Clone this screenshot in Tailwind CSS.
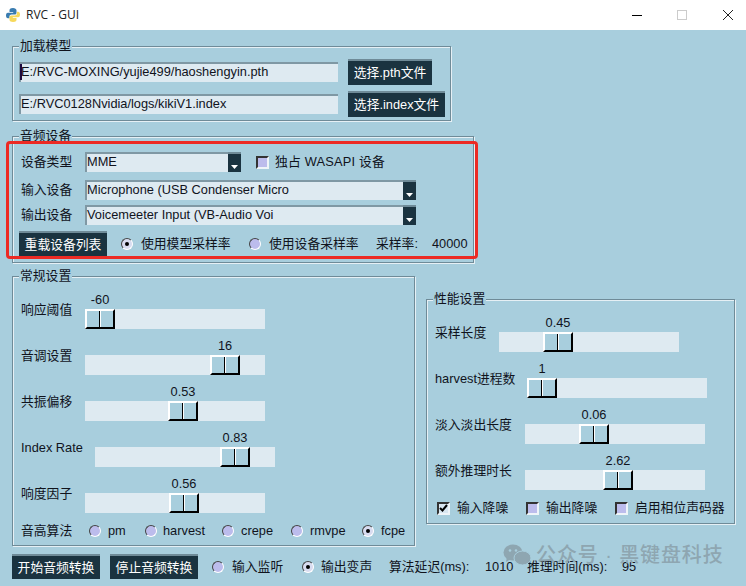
<!DOCTYPE html>
<html lang="en">
<head>
<meta charset="UTF-8">
<title>RVC - GUI</title>
<script src="https://cdn.jsdelivr.net/npm/@tailwindcss/browser@4"></script>
</head>
<body class="relative h-[586px] w-[746px] overflow-hidden bg-[#a8cedd] font-['Liberation_Sans','Noto_Sans_CJK_SC',sans-serif] text-[12.8px] leading-5 text-[#10131c]">

<!-- title bar -->
<div class="flex h-[30px] items-center bg-white">
  <svg class="ml-[5px]" width="16" height="16" viewBox="0 0 16 16">
    <path d="M8 1C5 1 4.500 2 4.500 3.500V5H8.200V5.700H3C1.500 5.700 1 7 1 8.500S1.600 11.300 3 11.300H4.500V9.500C4.500 8.300 5.400 7.600 6.500 7.600H9.800C10.800 7.600 11.500 6.800 11.500 5.800V3.300C11.500 2 10 1 8 1Z" fill="#3a7cb0"/>
    <path d="M8 15C11 15 11.500 14 11.500 12.500V11H7.800V10.300H13C14.500 10.300 15 9 15 7.500S14.400 4.700 13 4.700H11.900V6.500C11.900 7.700 11 8.400 9.900 8.400H6.200C5.200 8.400 4.500 9.200 4.500 10.200V12.700C4.500 14 6 15 8 15Z" fill="#f7d95c"/>
  </svg>
  <span class="ml-[5px] font-['Open_Sans'] text-[12px] text-[#222]">RVC - GUI</span>
  <div class="ml-auto flex items-center">
    <div class="h-px w-[10px] bg-black"></div>
    <div class="ml-[35px] size-[10px] border border-[#ccc]"></div>
    <svg class="ml-[36px] mr-[13px]" width="10" height="10" viewBox="0 0 10 10"><path d="M0 0L10 10M10 0L0 10" stroke="#222" fill="none"/></svg>
  </div>
</div>

<div class="pl-3">
  <!-- 加载模型 -->
  <div class="relative mt-4 h-[75px] w-[439px] border border-[#6f8b98] pl-[6px] pt-3 shadow-[1px_1px_0_#e6f0f5,inset_1px_1px_0_#e6f0f5]">
    <span class="absolute -top-[11px] left-[6px] bg-[#a8cedd] px-px">加载模型</span>
    <div class="flex h-[26px] items-center">
      <div class="relative h-5 w-[319px] border-t-2 border-l-2 border-t-[#7f98a4] border-l-[#7f98a4] bg-[#deeaf1] leading-[16px]">
        <span class="absolute -left-px top-0 h-4 w-0.5 bg-[#1c0a40]"></span>E:/RVC-MOXING/yujie499/haoshengyin.pth
      </div>
      <button class="ml-[10px] h-[26px] w-[84px] border-t-2 border-t-[#6f8b98] bg-[#1a3340] text-white">选择.pth文件</button>
    </div>
    <div class="mt-[6px] flex h-[26px] items-center">
      <div class="h-5 w-[319px] border-t-2 border-l-2 border-t-[#7f98a4] border-l-[#7f98a4] bg-[#deeaf1] leading-[16px]">E:/RVC0128Nvidia/logs/kikiV1.index</div>
      <button class="ml-[10px] h-[26px] w-[97px] border-t-2 border-t-[#6f8b98] bg-[#1a3340] text-white">选择.index文件</button>
    </div>
  </div>

  <!-- 音频设备 -->
  <div class="relative mt-[15px] h-[127px] w-[462px] border border-[#6f8b98] pl-[6px] pt-[15px] shadow-[1px_1px_0_#e6f0f5,inset_1px_1px_0_#e6f0f5]">
    <span class="absolute -top-[11px] left-[6px] bg-[#a8cedd] px-px">音频设备</span>
    <div class="flex h-5 items-center">
      <span class="-mt-px w-[66px] pl-0.5">设备类型</span>
      <div class="flex h-5 w-[156px] bg-[#deeaf1]">
        <span class="flex-1 border-t-2 border-l-2 border-t-[#7f98a4] border-l-[#7f98a4] leading-[15px]">MME</span>
        <span class="flex w-[13px] items-end justify-center border-t-2 border-t-[#6f8b98] bg-[#1a3340] pb-[3px]"><svg width="7" height="4" viewBox="0 0 7 4"><path d="M0 0H7L3.500 4Z" fill="#fff"/></svg></span>
      </div>
      <span class="ml-[15px] size-[13px] border-2 border-t-[#333] border-l-[#333] border-b-[#eef4f8] border-r-[#eef4f8] bg-[#bcbcec]"></span>
      <span class="ml-[6px] tracking-[0.2px]">独占 WASAPI 设备</span>
    </div>
    <div class="mt-2 flex h-5 items-center">
      <span class="-mt-px w-[66px] pl-0.5">输入设备</span>
      <div class="flex h-5 w-[331px] bg-[#deeaf1]">
        <span class="flex-1 border-t-2 border-l-2 border-t-[#7f98a4] border-l-[#7f98a4] leading-[15px]">Microphone (USB Condenser Micro</span>
        <span class="flex w-[13px] items-end justify-center border-t-2 border-t-[#6f8b98] bg-[#1a3340] pb-[3px]"><svg width="7" height="4" viewBox="0 0 7 4"><path d="M0 0H7L3.500 4Z" fill="#fff"/></svg></span>
      </div>
    </div>
    <div class="mt-[5px] flex h-5 items-center">
      <span class="-mt-px w-[66px] pl-0.5">输出设备</span>
      <div class="flex h-5 w-[331px] bg-[#deeaf1]">
        <span class="flex-1 border-t-2 border-l-2 border-t-[#7f98a4] border-l-[#7f98a4] leading-[15px]">Voicemeeter Input (VB-Audio Voi</span>
        <span class="flex w-[13px] items-end justify-center border-t-2 border-t-[#6f8b98] bg-[#1a3340] pb-[3px]"><svg width="7" height="4" viewBox="0 0 7 4"><path d="M0 0H7L3.500 4Z" fill="#fff"/></svg></span>
      </div>
    </div>
    <div class="mt-[6px] flex h-[26px] items-center">
      <button class="h-[26px] w-[88px] border-t-2 border-t-[#6f8b98] bg-[#1a3340] text-white">重载设备列表</button>
      <span class="ml-[14px] flex size-3 items-center justify-center rounded-full border-[1.5px] border-t-[#444] border-l-[#444] border-b-white border-r-white bg-[#d8dcf0]"><span class="size-1 rounded-full bg-black"></span></span>
      <span class="ml-2 w-[108px]">使用模型采样率</span>
      <span class="size-3 rounded-full border-[1.5px] border-t-[#444] border-l-[#444] border-b-white border-r-white bg-[#bcbcec]"></span>
      <span class="ml-2 w-[107px]">使用设备采样率</span>
      <span class="w-[56px]">采样率:</span>
      <span>40000</span>
    </div>
  </div>

  <div class="flex items-start">
    <!-- 常规设置 -->
    <div class="relative mt-[13px] h-[270px] w-[403px] border border-[#6f8b98] pl-2 pt-[32px] shadow-[1px_1px_0_#e6f0f5,inset_1px_1px_0_#e6f0f5]">
      <span class="absolute -top-[11px] left-[6px] bg-[#a8cedd] px-px">常规设置</span>
      <div class="flex h-5 items-start">
        <span class="-mt-[9px] w-[64px]">响应阈值</span>
        <div class="relative h-5 w-[180px] bg-[#deeaf1]">
          <div class="absolute left-0 top-0 flex h-5 w-[30px] border-2 border-t-white border-l-white border-b-black border-r-black bg-[#a8cedd]">
            <span class="absolute -top-[21px] left-0 w-[26px] text-center">-60</span>
            <i class="flex-1 border-r border-r-black"></i><i class="flex-1 border-l border-l-white"></i>
          </div>
        </div>
      </div>
      <div class="mt-[26px] flex h-5 items-start">
        <span class="-mt-[9px] w-[64px]">音调设置</span>
        <div class="relative h-5 w-[180px] bg-[#deeaf1]">
          <div class="absolute left-[125px] top-0 flex h-5 w-[30px] border-2 border-t-white border-l-white border-b-black border-r-black bg-[#a8cedd]">
            <span class="absolute -top-[21px] left-0 w-[26px] text-center">16</span>
            <i class="flex-1 border-r border-r-black"></i><i class="flex-1 border-l border-l-white"></i>
          </div>
        </div>
      </div>
      <div class="mt-[26px] flex h-5 items-start">
        <span class="-mt-[9px] w-[64px]">共振偏移</span>
        <div class="relative h-5 w-[180px] bg-[#deeaf1]">
          <div class="absolute left-[83px] top-0 flex h-5 w-[30px] border-2 border-t-white border-l-white border-b-black border-r-black bg-[#a8cedd]">
            <span class="absolute -top-[21px] left-0 w-[26px] text-center">0.53</span>
            <i class="flex-1 border-r border-r-black"></i><i class="flex-1 border-l border-l-white"></i>
          </div>
        </div>
      </div>
      <div class="mt-[26px] flex h-5 items-start">
        <span class="-mt-[9px] w-[74px]">Index Rate</span>
        <div class="relative h-5 w-[180px] bg-[#deeaf1]">
          <div class="absolute left-[125px] top-0 flex h-5 w-[30px] border-2 border-t-white border-l-white border-b-black border-r-black bg-[#a8cedd]">
            <span class="absolute -top-[21px] left-0 w-[26px] text-center">0.83</span>
            <i class="flex-1 border-r border-r-black"></i><i class="flex-1 border-l border-l-white"></i>
          </div>
        </div>
      </div>
      <div class="mt-[26px] flex h-5 items-start">
        <span class="-mt-[9px] w-[64px]">响度因子</span>
        <div class="relative h-5 w-[180px] bg-[#deeaf1]">
          <div class="absolute left-[84px] top-0 flex h-5 w-[30px] border-2 border-t-white border-l-white border-b-black border-r-black bg-[#a8cedd]">
            <span class="absolute -top-[21px] left-0 w-[26px] text-center">0.56</span>
            <i class="flex-1 border-r border-r-black"></i><i class="flex-1 border-l border-l-white"></i>
          </div>
        </div>
      </div>
      <div class="mt-2 flex h-5 items-center">
        <span class="w-[68px]">音高算法</span>
        <span class="size-3 rounded-full border-[1.5px] border-t-[#444] border-l-[#444] border-b-white border-r-white bg-[#bcbcec]"></span>
        <span class="ml-[7px] w-[37px]">pm</span>
        <span class="size-3 rounded-full border-[1.5px] border-t-[#444] border-l-[#444] border-b-white border-r-white bg-[#bcbcec]"></span>
        <span class="ml-[6px] w-[59px]">harvest</span>
        <span class="size-3 rounded-full border-[1.5px] border-t-[#444] border-l-[#444] border-b-white border-r-white bg-[#bcbcec]"></span>
        <span class="ml-[7px] w-[50px]">crepe</span>
        <span class="size-3 rounded-full border-[1.5px] border-t-[#444] border-l-[#444] border-b-white border-r-white bg-[#bcbcec]"></span>
        <span class="ml-[7px] w-[52px]">rmvpe</span>
        <span class="flex size-3 items-center justify-center rounded-full border-[1.5px] border-t-[#444] border-l-[#444] border-b-white border-r-white bg-[#d8dcf0]"><span class="size-1 rounded-full bg-black"></span></span>
        <span class="ml-[7px]">fcpe</span>
      </div>
    </div>

    <!-- 性能设置 -->
    <div class="relative ml-[11px] mt-[36px] h-[225px] w-[309px] border border-[#6f8b98] pl-2 pt-[32px] shadow-[1px_1px_0_#e6f0f5,inset_1px_1px_0_#e6f0f5]">
      <span class="absolute -top-[11px] left-[6px] bg-[#a8cedd] px-px">性能设置</span>
      <div class="flex h-5 items-start">
        <span class="-mt-[9px] w-[64px]">采样长度</span>
        <div class="relative h-5 w-[180px] bg-[#deeaf1]">
          <div class="absolute left-[44px] top-0 flex h-5 w-[30px] border-2 border-t-white border-l-white border-b-black border-r-black bg-[#a8cedd]">
            <span class="absolute -top-[21px] left-0 w-[26px] text-center">0.45</span>
            <i class="flex-1 border-r border-r-black"></i><i class="flex-1 border-l border-l-white"></i>
          </div>
        </div>
      </div>
      <div class="mt-[26px] flex h-5 items-start">
        <span class="-mt-[9px] w-[92px]">harvest进程数</span>
        <div class="relative h-5 w-[180px] bg-[#deeaf1]">
          <div class="absolute left-0 top-0 flex h-5 w-[30px] border-2 border-t-white border-l-white border-b-black border-r-black bg-[#a8cedd]">
            <span class="absolute -top-[21px] left-0 w-[26px] text-center">1</span>
            <i class="flex-1 border-r border-r-black"></i><i class="flex-1 border-l border-l-white"></i>
          </div>
        </div>
      </div>
      <div class="mt-[26px] flex h-5 items-start">
        <span class="-mt-[9px] w-[90px]">淡入淡出长度</span>
        <div class="relative h-5 w-[180px] bg-[#deeaf1]">
          <div class="absolute left-[54px] top-0 flex h-5 w-[30px] border-2 border-t-white border-l-white border-b-black border-r-black bg-[#a8cedd]">
            <span class="absolute -top-[21px] left-0 w-[26px] text-center">0.06</span>
            <i class="flex-1 border-r border-r-black"></i><i class="flex-1 border-l border-l-white"></i>
          </div>
        </div>
      </div>
      <div class="mt-[26px] flex h-5 items-start">
        <span class="-mt-[9px] w-[90px]">额外推理时长</span>
        <div class="relative h-5 w-[180px] bg-[#deeaf1]">
          <div class="absolute left-[78px] top-0 flex h-5 w-[30px] border-2 border-t-white border-l-white border-b-black border-r-black bg-[#a8cedd]">
            <span class="absolute -top-[21px] left-0 w-[26px] text-center">2.62</span>
            <i class="flex-1 border-r border-r-black"></i><i class="flex-1 border-l border-l-white"></i>
          </div>
        </div>
      </div>
      <div class="mt-2 flex h-5 items-center pl-0.5">
        <span class="flex size-[13px] items-center justify-center border-2 border-t-[#333] border-l-[#333] border-b-[#eef4f8] border-r-[#eef4f8] bg-[#d8e6f0]"><svg width="9" height="8" viewBox="0 0 9 8"><path d="M1 4L3.500 6.500L8 1" stroke="#000" stroke-width="2" fill="none"/></svg></span>
        <span class="ml-[7px] w-[69px]">输入降噪</span>
        <span class="size-[13px] border-2 border-t-[#333] border-l-[#333] border-b-[#eef4f8] border-r-[#eef4f8] bg-[#bcbcec]"></span>
        <span class="ml-[7px] w-[69px]">输出降噪</span>
        <span class="size-[13px] border-2 border-t-[#333] border-l-[#333] border-b-[#eef4f8] border-r-[#eef4f8] bg-[#bcbcec]"></span>
        <span class="ml-[7px]">启用相位声码器</span>
      </div>
    </div>
  </div>

  <!-- bottom controls -->
  <div class="mt-2 flex h-[25px] items-center">
    <button class="h-[25px] w-[88px] border-t-2 border-t-[#6f8b98] bg-[#1a3340] text-white">开始音频转换</button>
    <button class="ml-[10px] h-[25px] w-[88px] border-t-2 border-t-[#6f8b98] bg-[#1a3340] text-white">停止音频转换</button>
    <span class="ml-[14px] size-3 rounded-full border-[1.5px] border-t-[#444] border-l-[#444] border-b-white border-r-white bg-[#bcbcec]"></span>
    <span class="ml-2 w-[70px]">输入监听</span>
    <span class="flex size-3 items-center justify-center rounded-full border-[1.5px] border-t-[#444] border-l-[#444] border-b-white border-r-white bg-[#d8dcf0]"><span class="size-1 rounded-full bg-black"></span></span>
    <span class="ml-[7px] w-[68px]">输出变声</span>
    <span class="w-[96px]">算法延迟(ms):</span>
    <span class="w-[42px]">1010</span>
    <span class="w-[95px]">推理时间(ms):</span>
    <span>95</span>
  </div>
</div>

<!-- red annotation -->
<div class="absolute left-[6px] top-[141px] h-[118px] w-[472px] rounded-[4px] border-[3px] border-[#ec2a24]"></div>

<!-- watermark -->
<div class="absolute left-[503px] top-[544px] flex items-center">
  <svg width="28" height="22" viewBox="0 0 28 22">
    <ellipse cx="10" cy="8.500" rx="9.500" ry="8" fill="#8ea6b1"/>
    <path d="M4 13L3 18L8 15Z" fill="#8ea6b1"/>
    <ellipse cx="19.500" cy="14" rx="8.500" ry="7" fill="#8ea6b1" stroke="#a8cedd"/>
    <circle cx="7" cy="6.500" r="1.300" fill="#a8cedd"/>
    <circle cx="13" cy="6.500" r="1.300" fill="#a8cedd"/>
  </svg>
  <span class="ml-[5px] whitespace-nowrap text-[20px] font-medium tracking-[0.9px] text-[#8ea6b1]">公众号 · 黑键盘科技</span>
</div>
</body>
</html>
